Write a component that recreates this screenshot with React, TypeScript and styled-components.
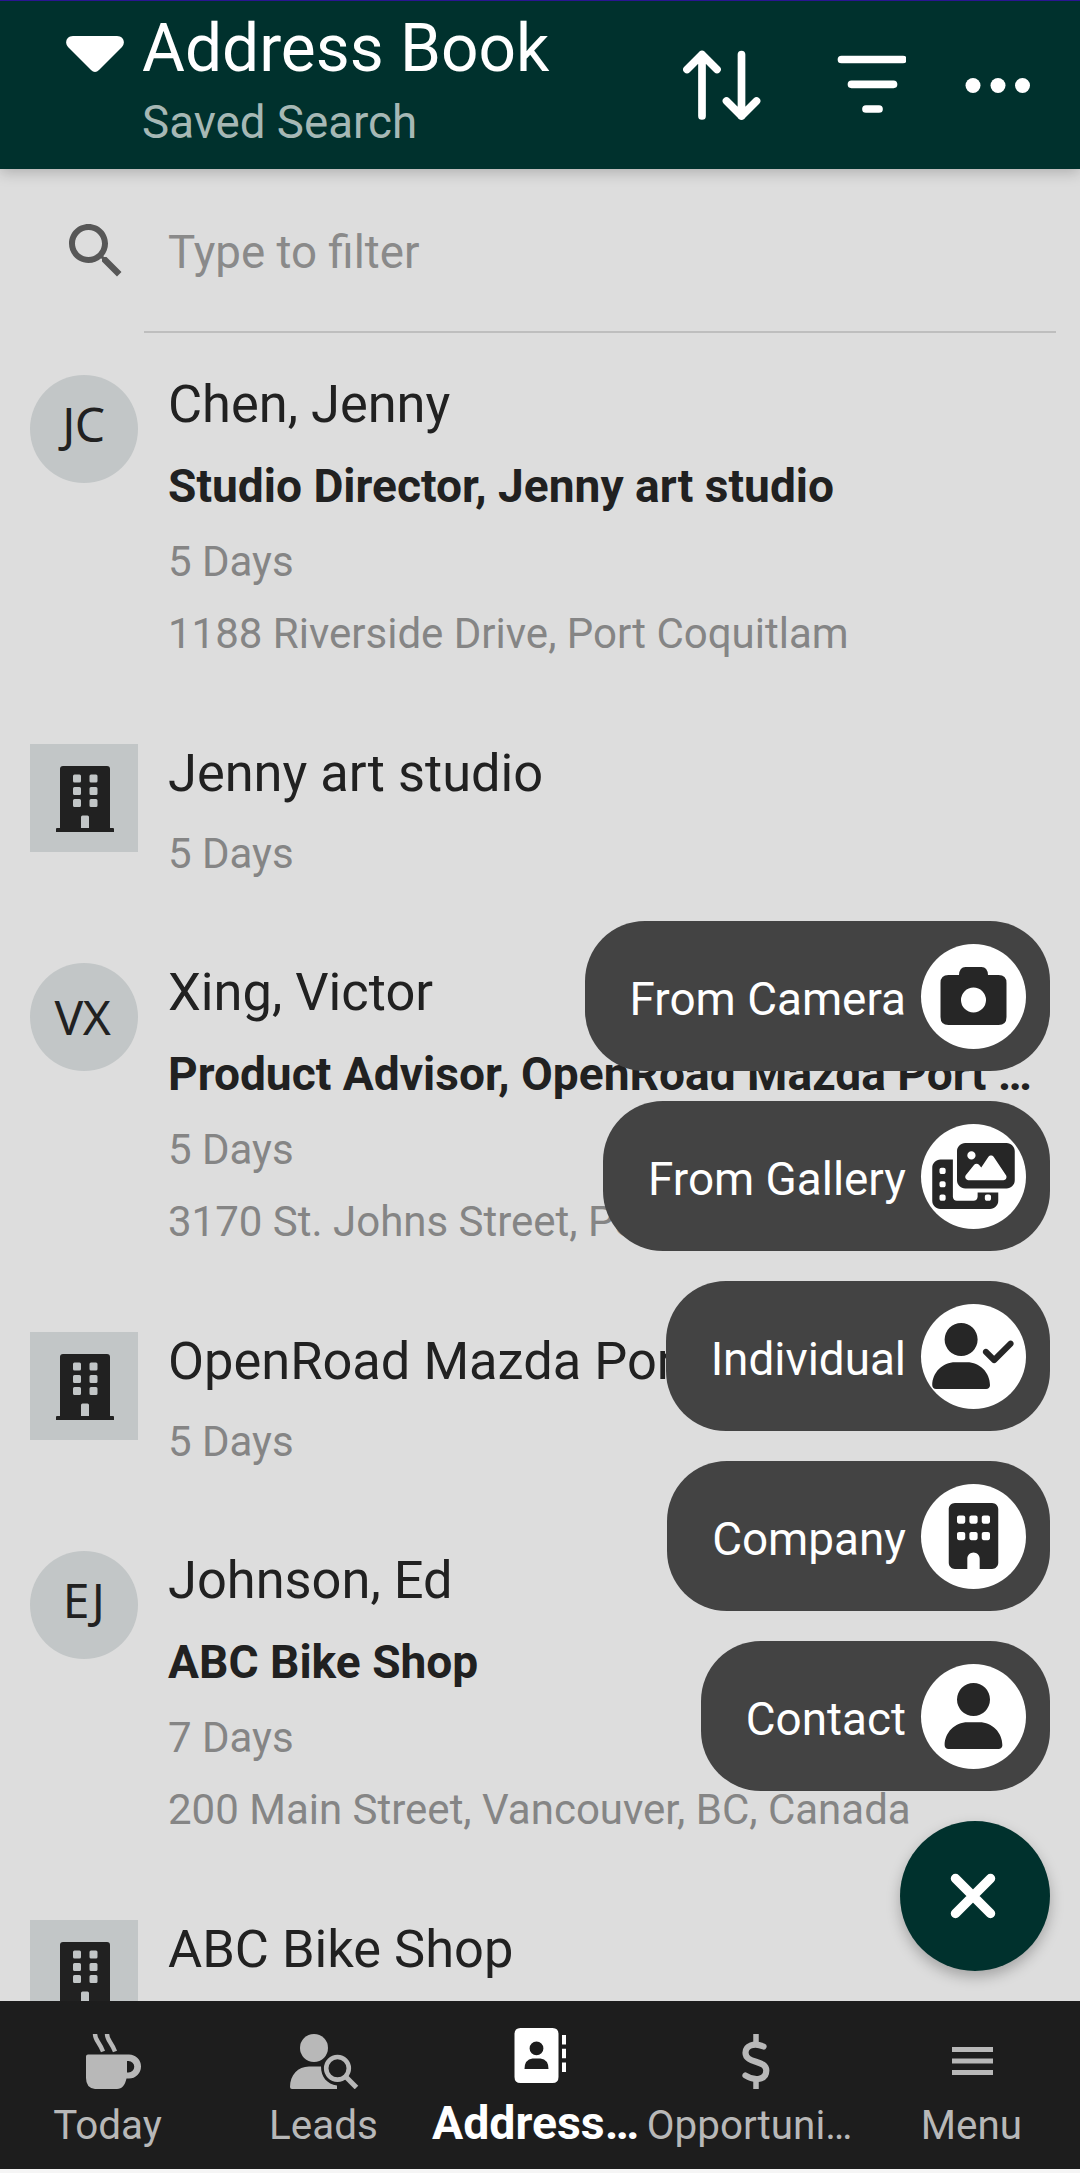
import React from "react";
import styled, { createGlobalStyle } from "styled-components";
import { FaBuilding, FaPhotoFilm, FaUser, FaUserCheck } from "react-icons/fa6";

const GlobalStyle = createGlobalStyle`
  *, *::before, *::after { box-sizing: border-box; }
  body { margin: 0; background: #dddddd; font-family: Roboto, "Noto Sans", sans-serif; }
`;

const Screen = styled.div`
  position: relative;
  display: flex;
  flex-direction: column;
  width: 1080px;
  height: 2173px;
  overflow: hidden;
  background: #dddddd;
  color: #212121;
`;

const Header = styled.header`
  display: flex;
  flex: none;
  height: 169px;
  padding-left: 66px;
  border-top: 1px solid #2a1592;
  background: #00312d;
  box-shadow: 0 3px 14px rgba(0, 0, 0, 0.22);
  z-index: 1;
`;

const Caret = styled.svg`
  flex: none;
  width: 58px;
  height: 36px;
  margin-top: 35px;
`;

const Titles = styled.div`
  flex: 1;
  padding-left: 18px;
`;

const Title = styled.h1`
  margin: 10px 0 0;
  font-size: 65.8px;
  font-weight: 400;
  line-height: 76px;
  color: #fff;
`;

const Subtitle = styled.div`
  margin-top: 9px;
  font-size: 45.7px;
  line-height: 54px;
  color: #a6b8b5;
`;

const Actions = styled.div`
  display: flex;
  align-items: flex-start;
  padding: 43px 42px 0 0;

  svg + svg { margin-left: 60px; }
  svg:last-child { margin-left: 51.5px; }
`;

const ActionIcon = styled.svg`
  flex: none;
  display: block;
  height: 84px;
`;

const Filter = styled.div`
  display: flex;
  flex: none;
  height: 164px;
  padding: 46px 24px 0 60px;
`;

const FilterIcon = styled.svg`
  flex: none;
  width: 72px;
  height: 72px;
`;

const FilterField = styled.div`
  flex: 1;
  height: 118px;
  margin-left: 12px;
  padding: 10px 0 0 24px;
  border-bottom: 2px solid #bebebe;
  font-size: 45.7px;
  line-height: 56px;
  color: #8a8a8a;
`;

const List = styled.main`
  flex: 1;
  min-height: 0;
  padding-top: 27px;
  overflow: hidden;
`;

const Row = styled.article`
  display: flex;
  padding: 0 30px 59px;

  &:nth-child(even) { padding-bottom: 58px; }
`;

const Avatar = styled.div<{ $round?: boolean; $low?: boolean }>`
  display: flex;
  flex: none;
  justify-content: center;
  width: 108px;
  height: 108px;
  margin-top: 15px;
  padding-right: ${(p) => (p.$low ? "3px" : p.$round ? "1px" : "0")};
  border-radius: ${(p) => (p.$round ? "50%" : "0")};
  background: #c2c6c7;
  font-family: "Noto Sans", "Open Sans", sans-serif;
  font-size: 48px;
  line-height: ${(p) => (p.$low ? "107px" : "98px")};
  letter-spacing: -0.5px;
`;

const AvatarBuilding = styled.svg`
  width: 58px;
  height: 66px;
  margin: 22px 0 0 2px;
`;

const RowText = styled.div`
  flex: 1;
  min-width: 0;
  padding-left: 30px;
  white-space: nowrap;
`;

const Name = styled.div`
  margin-bottom: 1px;
  font-size: 52.4px;
  line-height: 88px;
`;

const Role = styled.div`
  margin: -1px 0 2px;
  font-size: 46.1px;
  font-weight: 700;
  line-height: 76px;
`;

const Meta = styled.div`
  font-size: 42px;
  line-height: 72px;
  color: #858585;
`;

const SpeedDial = styled.div`
  position: absolute;
  right: 30px;
  bottom: 202px;
  display: flex;
  flex-direction: column;
  align-items: flex-end;
  gap: 30px;
  z-index: 2;
`;

const Chip = styled.button`
  display: flex;
  align-items: center;
  gap: 15px;
  height: 150px;
  padding: 0 24px 0 45px;
  border: 0;
  border-radius: 60px;
  background: #434343;
  color: #fff;
  font: 400 45.85px/54px Roboto, "Noto Sans", sans-serif;
`;

const ChipLabel = styled.span`
  padding-top: 6px;
`;

const ChipIcon = styled.span`
  display: flex;
  align-items: center;
  justify-content: center;
  width: 105px;
  height: 105px;
  border-radius: 50%;
  background: #fff;
  color: #262626;

  svg { flex: none; width: 83px; height: 66px; }
`;

const Fab = styled.button`
  display: flex;
  align-items: center;
  justify-content: center;
  width: 150px;
  height: 150px;
  padding: 0 4px 0 0;
  border: 0;
  border-radius: 50%;
  background: #00312d;
  box-shadow: 0 6px 14px rgba(0, 0, 0, 0.26);
`;

const TabBar = styled.nav`
  display: grid;
  grid-template-columns: repeat(5, 216px);
  flex: none;
  height: 172px;
  border-bottom: 4px solid #f5f5f5;
  background: #1d1d1d;
`;

const Tab = styled.div<{ $active?: boolean; $shift?: number }>`
  display: flex;
  flex-direction: column;
  align-items: center;
  padding-top: ${(p) => (p.$active ? "27px" : "33px")};
  color: ${(p) => (p.$active ? "#fff" : "#b8b8b8")};
  font-size: ${(p) => (p.$active ? "46.4px" : "40.4px")};
  font-weight: ${(p) => (p.$active ? 700 : 400)};
  line-height: 50px;
  white-space: nowrap;

  > svg { flex: none; width: auto; height: 55px; }
  > span {
    margin-top: ${(p) => (p.$active ? "15px" : "12px")};
    margin-right: ${(p) => p.$shift ?? 1}px;
  }
`;

const BuildingMark = () => (
  <AvatarBuilding viewBox="0 0 58 66">
    <path
      fill="#212121"
      fillRule="evenodd"
      d="M7 0H51Q54 0 54 3V62H57Q58 62 58 63V66H0V63Q0 62 1 62H4V3Q4 0 7 0ZM18.500 8.500Q17 8.500 17 10V15Q17 16.500 18.500 16.500H23.500Q25 16.500 25 15V10Q25 8.500 23.500 8.500ZM35 8.500Q33.500 8.500 33.500 10V15Q33.500 16.500 35 16.500H40Q41.500 16.500 41.500 15V10Q41.500 8.500 40 8.500ZM18.500 21Q17 21 17 22.500V27.500Q17 29 18.500 29H23.500Q25 29 25 27.500V22.500Q25 21 23.500 21ZM35 21Q33.500 21 33.500 22.500V27.500Q33.500 29 35 29H40Q41.500 29 41.500 27.500V22.500Q41.500 21 40 21ZM18.500 33Q17 33 17 34.500V39.500Q17 41 18.500 41H23.500Q25 41 25 39.500V34.500Q25 33 23.500 33ZM35 33Q33.500 33 33.500 34.500V39.500Q33.500 41 35 41H40Q41.500 41 41.500 39.500V34.500Q41.500 33 40 33ZM26.500 49.500Q25 49.500 25 51V62H33V51Q33 49.500 31.500 49.500Z"
    />
  </AvatarBuilding>
);

const CameraMark = () => (
  <svg viewBox="0 0 66 66" fill="currentColor">
    <path
      fillRule="evenodd"
      d="M25 4H41Q47 4 47.500 12H58Q66 12 66 20V54Q66 62 58 62H8Q0 62 0 54V20Q0 12 8 12H18.500Q19 4 25 4ZM33 24.500A12.500 12.500 0 1 0 33 49.500A12.500 12.500 0 1 0 33 24.500Z"
    />
  </svg>
);

const MugMark = () => (
  <svg viewBox="-10 0 65 55" fill="currentColor">
    <path
      fillRule="evenodd"
      d="M2 20.500H43A12 12 0 0 1 43 44.500H40.500C39 51 36 55 31 55H9Q0 54 0 44V22.500Q0 20.500 2 20.500ZM41 27V38.500H42.500A5.750 5.750 0 0 0 42.500 27Z"
    />
    <path fill="none" stroke="currentColor" strokeWidth="4.400" d="M9 0Q9 3.500 12 8T17 17.500M21 0Q21 3.500 24 8T29 17.500" />
  </svg>
);

const LeadsMark = () => (
  <svg viewBox="0 0 69 55">
    <circle cx="24" cy="14" r="14" fill="currentColor" />
    <path fill="currentColor" d="M19 32.500H31C31 43 37 50 47 51.500V55H2Q0 55 0 53C0 41 8 32.500 19 32.500Z" />
    <circle cx="47.500" cy="34.300" r="11.300" fill="none" stroke="currentColor" strokeWidth="4.600" />
    <path d="M55.500 42.500L66.500 53.500" stroke="currentColor" strokeWidth="5" />
  </svg>
);

const AddressMark = () => (
  <svg viewBox="-1.500 0 54 55">
    <path
      fill="currentColor"
      fillRule="evenodd"
      d="M6 0H38Q44 0 44 6V49Q44 55 38 55H6Q0 55 0 49V6Q0 0 6 0ZM22 13.500A6.900 6.900 0 1 0 22 27.300A6.900 6.900 0 1 0 22 13.500ZM18 30.500Q10 31.500 10 41H34Q34 31.500 26 30.500Z"
    />
    <path stroke="currentColor" strokeWidth="4" d="M49.500 7V16.500M49.500 20.700V30.200M49.500 34.500V44" />
  </svg>
);

const DollarMark = () => (
  <svg viewBox="0 0 28 55" fill="none" stroke="currentColor" strokeWidth="6.200">
    <path strokeLinecap="round" d="M21.500 12.500C12 8.500 3.500 11.500 3.500 18.800C3.500 30 24.300 25.500 24.300 36.500C24.300 46 13 47.500 3.500 41.500" />
    <path strokeWidth="5.500" d="M14 0V9M14 46V55" />
  </svg>
);

const MenuMark = () => (
  <svg viewBox="0 0 41 55">
    <path stroke="currentColor" strokeWidth="5" d="M0 15.500H41M0 27H41M0 38.500H41" />
  </svg>
);

type Contact = { initials?: string; low?: boolean; name: string; role?: string; age?: string; address?: string };

const contacts: Contact[] = [
  { initials: "JC", name: "Chen, Jenny", role: "Studio Director, Jenny art studio", age: "5 Days", address: "1188 Riverside Drive, Port Coquitlam" },
  { name: "Jenny art studio", age: "5 Days" },
  { initials: "VX", low: true, name: "Xing, Victor", role: "Product Advisor, OpenRoad Mazda Port …", age: "5 Days", address: "3170 St. Johns Street, Port Moody" },
  { name: "OpenRoad Mazda Port Moody", age: "5 Days" },
  { initials: "EJ", name: "Johnson, Ed", role: "ABC Bike Shop", age: "7 Days", address: "200 Main Street, Vancouver, BC, Canada" },
  { name: "ABC Bike Shop" },
];

const actions = [
  { label: "From Camera", icon: <CameraMark /> },
  { label: "From Gallery", icon: <FaPhotoFilm /> },
  { label: "Individual", icon: <FaUserCheck /> },
  { label: "Company", icon: <FaBuilding /> },
  { label: "Contact", icon: <FaUser /> },
];

const tabs = [
  { label: "Today", icon: <MugMark /> },
  { label: "Leads", icon: <LeadsMark /> },
  { label: "Address…", icon: <AddressMark />, active: true, shift: 9 },
  { label: "Opportuni…", icon: <DollarMark />, shift: 13 },
  { label: "Menu", icon: <MenuMark /> },
];

export default function App() {
  return (
    <>
      <GlobalStyle />
      <Screen>
        <Header>
          <Caret viewBox="0 0 58 36">
            <path fill="#fff" d="M7 0H51C57 0 60 6 56 11L33 34Q29 38 25 34L2 11C-2 6 1 0 7 0Z" />
          </Caret>
          <Titles>
            <Title>Address Book</Title>
            <Subtitle>Saved Search</Subtitle>
          </Titles>
          <Actions>
            <ActionIcon width="78" viewBox="0 0 78 84" fill="none" stroke="#fff" strokeWidth="7.700" strokeLinecap="round" strokeLinejoin="round">
              <path d="M19 72V10.500M4 25.500L19 10.500L34 25.500M58.500 10.500V72M43.500 57L58.500 72L73.500 57" />
            </ActionIcon>
            <ActionIcon width="85" viewBox="0 0 85 84" fill="none" stroke="#fff" strokeWidth="7.700" strokeLinecap="round">
              <path d="M20.500 15.500H82M30.500 40.300H72.500M45 65H58" />
            </ActionIcon>
            <ActionIcon width="81" viewBox="0 0 81 84" fill="#fff">
              <circle cx="16" cy="41.500" r="7.500" />
              <circle cx="41" cy="41.500" r="7.500" />
              <circle cx="65.500" cy="41.500" r="7.500" />
            </ActionIcon>
          </Actions>
        </Header>
        <Filter>
          <FilterIcon viewBox="0 0 24 24">
            <path
              fill="#575757"
              d="M15.500 14h-.790l-.280-.270C15.410 12.590 16 11.110 16 9.500 16 5.910 13.090 3 9.500 3S3 5.910 3 9.500 5.910 16 9.500 16c1.610 0 3.090-.590 4.230-1.570l.270.280v.790l5 4.990L20.490 19l-4.990-5zm-6 0C7.010 14 5 11.990 5 9.500S7.010 5 9.500 5 14 7.010 14 9.500 11.990 14 9.500 14z"
            />
          </FilterIcon>
          <FilterField>Type to filter</FilterField>
        </Filter>
        <List>
          {contacts.map((c) => (
            <Row key={c.name}>
              <Avatar $round={Boolean(c.initials)} $low={c.low}>
                {c.initials ?? <BuildingMark />}
              </Avatar>
              <RowText>
                <Name>{c.name}</Name>
                {c.role && <Role>{c.role}</Role>}
                {c.age && <Meta>{c.age}</Meta>}
                {c.address && <Meta>{c.address}</Meta>}
              </RowText>
            </Row>
          ))}
        </List>
        <TabBar>
          {tabs.map((t) => (
            <Tab key={t.label} $active={t.active} $shift={t.shift}>
              {t.icon}
              <span>{t.label}</span>
            </Tab>
          ))}
        </TabBar>
        <SpeedDial>
          {actions.map((a) => (
            <Chip key={a.label}>
              <ChipLabel>{a.label}</ChipLabel>
              <ChipIcon>{a.icon}</ChipIcon>
            </Chip>
          ))}
          <Fab aria-label="Close">
            <svg width="46" height="46" viewBox="0 0 46 46" stroke="#fff" strokeWidth="9.500" strokeLinecap="round">
              <path d="M5.500 5.500L40.500 40.500M40.500 5.500L5.500 40.500" />
            </svg>
          </Fab>
        </SpeedDial>
      </Screen>
    </>
  );
}
